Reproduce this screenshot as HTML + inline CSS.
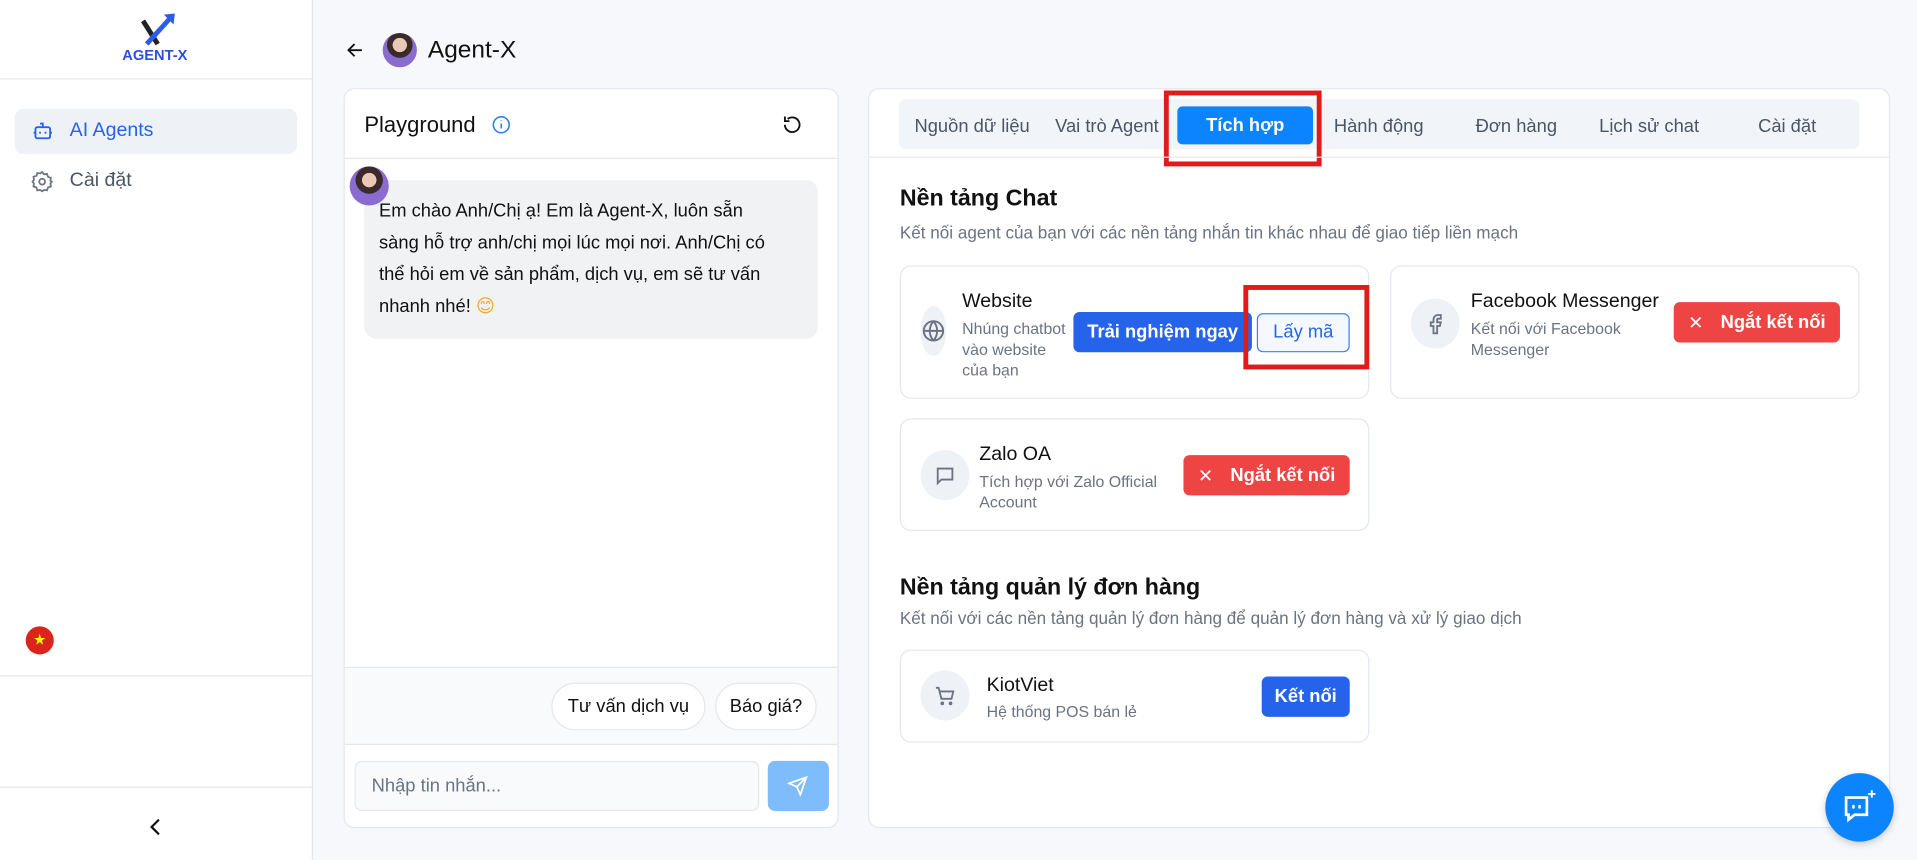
<!DOCTYPE html>
<html><head><meta charset="utf-8"><style>
*{box-sizing:border-box;margin:0;padding:0}
html,body{width:1917px;height:860px;overflow:hidden;background:#f5f7fa;font-family:"Liberation Sans","DejaVu Sans",sans-serif}
#w{position:absolute;left:0;top:0;width:1568px;height:703px;transform:scale(1.22258,1.2233);transform-origin:0 0;background:#f6f8fb}
.a{position:absolute}
.side{left:0;top:0;width:256px;height:703px;background:#fff;border-right:1px solid #e5e7eb}
.card{background:#fff;border:1px solid #e3e7ee;border-radius:9px}
.t{white-space:nowrap}
.gray{color:#6b7280}
.btn{border-radius:5px;color:#fff;font-weight:bold;font-size:15px;display:flex;align-items:center;justify-content:center}
.ic{background:#eef2f7;border-radius:50%;display:flex;align-items:center;justify-content:center}
</style></head><body><div id="w">
<div class="a side">
  <svg class="a" style="left:112px;top:10px" width="34" height="28" viewBox="0 0 34 28"><path d="M5 7 L17 26" stroke="#222" stroke-width="4"/><path d="M8 26 L28 4" stroke="#2d5bea" stroke-width="4"/><path d="M22 2 L31 1 L30 10 Z" fill="#2d5bea"/></svg>
  <div class="a t" style="left:100px;top:38px;font-size:12px;font-weight:bold;color:#2d4fe0">AGENT-X</div>
  <div class="a" style="left:0;top:64px;width:256px;border-top:1px solid #e5e7eb"></div>
  <div class="a" style="left:12px;top:89px;width:231px;height:37px;background:#eef2f7;border-radius:7px"></div>
  <svg class="a" style="left:26px;top:98px" width="18" height="18" viewBox="0 0 24 24" fill="none" stroke="#2563eb" stroke-width="2"><rect x="4" y="8" width="16" height="12" rx="2"/><path d="M12 8V4H9M9 13v2M15 13v2M2 14h2M20 14h2"/></svg>
  <div class="a t" style="left:57px;top:98px;font-size:16px;color:#2563eb">AI Agents</div>
  <svg class="a" style="left:25px;top:139px" width="19" height="19" viewBox="0 0 24 24" fill="none" stroke="#6b7280" stroke-width="1.8"><circle cx="12" cy="12" r="3"/><path d="M12 2l2 2.5 3-.5 1 3 3 1-.5 3L22 12l-1.5 2 .5 3-3 1-1 3-3-.5L12 22l-2-1.5-3 .5-1-3-3-1 .5-3L2 12l1.5-2-.5-3 3-1 1-3 3 .5z"/></svg>
  <div class="a t" style="left:57px;top:139px;font-size:16px;color:#4b5563">Cài đặt</div>
  <div class="a" style="left:21px;top:512px;width:23px;height:23px;border-radius:50%;background:#da251d;color:#ff0;font-size:12px;text-align:center;line-height:23px">★</div>
  <div class="a" style="left:0;top:552px;width:256px;border-top:1px solid #e5e7eb"></div>
  <div class="a" style="left:0;top:643px;width:256px;border-top:1px solid #e5e7eb"></div>
  <svg class="a" style="left:121px;top:668px" width="12" height="16" viewBox="0 0 12 16" fill="none" stroke="#111" stroke-width="1.8"><path d="M9 2L3 8l6 6"/></svg>
</div>
<svg class="a" style="left:284px;top:35px" width="13" height="12" viewBox="0 0 13 12" fill="none" stroke="#111" stroke-width="1.5"><path d="M12 6H2M6 1L1 6l5 5"/></svg>
<div class="a" style="left:313px;top:27px;width:28px;height:28px;border-radius:50%;background:radial-gradient(circle at 50% 35%,#e9c8b5 0 25%,#3a2a2a 26% 45%,#8a6bd0 46%)"></div>
<div class="a t" style="left:350px;top:30px;font-size:20px;color:#111">Agent-X</div>

<div class="a card" style="left:281px;top:72px;width:405px;height:605px;overflow:hidden">
  <div class="a t" style="left:16px;top:19px;font-size:18px;color:#111">Playground</div>
  <svg class="a" style="left:120px;top:21px" width="16" height="16" viewBox="0 0 16 16" fill="none" stroke="#2f80ed" stroke-width="1.3"><circle cx="8" cy="8" r="6.5"/><path d="M8 7v4M8 4.5v.5"/></svg>
  <svg class="a" style="left:357px;top:20px" width="18" height="18" viewBox="0 0 24 24" fill="none" stroke="#111" stroke-width="2"><path d="M4 12a8 8 0 1 0 3-6.3M4 3v5h5"/></svg>
  <div class="a" style="left:0;top:56px;width:405px;border-top:1px solid #e5e7eb"></div>
  <div class="a" style="left:16px;top:74px;width:371px;height:130px;background:#f1f2f4;border-radius:10px"></div>
  <div class="a" style="left:4px;top:63px;width:32px;height:32px;border-radius:50%;background:radial-gradient(circle at 50% 35%,#e9c8b5 0 22%,#3a2a2a 23% 42%,#8a6bd0 43%)"></div>
  <div class="a t" style="left:28px;top:87px;font-size:15px;line-height:26px;color:#111">Em chào Anh/Chị ạ! Em là Agent-X, luôn sẵn<br>sàng hỗ trợ anh/chị mọi lúc mọi nơi. Anh/Chị có<br>thể hỏi em về sản phẩm, dịch vụ, em sẽ tư vấn<br>nhanh nhé! <span style="color:#f4a623">😊</span></div>
  <div class="a" style="left:0;top:472px;width:405px;height:64px;background:#f8fafc;border-top:1px solid #e5e7eb;border-bottom:1px solid #e5e7eb"></div>
  <div class="a t" style="left:169px;top:485px;width:126px;height:39px;border:1px solid #e5e7eb;border-radius:20px;background:#fff;font-size:15px;line-height:37px;text-align:center;color:#111">Tư vấn dịch vụ</div>
  <div class="a t" style="left:303px;top:485px;width:83px;height:39px;border:1px solid #e5e7eb;border-radius:20px;background:#fff;font-size:15px;line-height:37px;text-align:center;color:#111">Báo giá?</div>
  <div class="a" style="left:8px;top:549px;width:331px;height:41px;border:1px solid #e5e7eb;border-radius:6px;background:#f8fafc;font-size:15px;line-height:39px;padding-left:13px;color:#6b7280">Nhập tin nhắn...</div>
  <div class="a" style="left:346px;top:549px;width:50px;height:41px;border-radius:6px;background:#7fbcfb"></div>
  <svg class="a" style="left:362px;top:561px" width="17" height="17" viewBox="0 0 24 24" fill="none" stroke="#fff" stroke-width="2"><path d="M22 2L11 13M22 2l-7 20-4-9-9-4z"/></svg>
</div>

<div class="a card" style="left:710px;top:72px;width:836px;height:605px">
  <div class="a" style="left:24px;top:8px;width:786px;height:41px;background:#f1f5f9;border-radius:6px"></div>
  <div class="a t gray" style="left:37px;top:22px;font-size:15px;color:#4b5563">Nguồn dữ liệu</div>
  <div class="a t" style="left:152px;top:22px;font-size:15px;color:#4b5563">Vai trò Agent</div>
  <div class="a" style="left:252px;top:14px;width:111px;height:31px;background:#0b84fe;border-radius:4px;color:#fff;font-size:15px;font-weight:bold;text-align:center;line-height:31px">Tích hợp</div>
  <div class="a" style="left:241px;top:1px;width:129px;height:62px;border:4px solid #e01b1b"></div>
  <div class="a t" style="left:380px;top:22px;font-size:15px;color:#4b5563">Hành động</div>
  <div class="a t" style="left:496px;top:22px;font-size:15px;color:#4b5563">Đơn hàng</div>
  <div class="a t" style="left:597px;top:22px;font-size:15px;color:#4b5563">Lịch sử chat</div>
  <div class="a t" style="left:727px;top:22px;font-size:15px;color:#4b5563">Cài đặt</div>
  <div class="a" style="left:0;top:55px;width:834px;border-top:1px solid #e5e7eb"></div>
  <div class="a t" style="left:25px;top:79px;font-size:19px;font-weight:600;color:#111">Nền tảng Chat</div>
  <div class="a t gray" style="left:25px;top:109px;font-size:14px">Kết nối agent của bạn với các nền tảng nhắn tin khác nhau để giao tiếp liền mạch</div>

  <div class="a card" style="left:25px;top:144px;width:384px;height:109px">
    <div class="a ic" style="left:16px;top:32px;width:21px;height:41px"><svg width="19" height="19" viewBox="0 0 24 24" fill="none" stroke="#6b7280" stroke-width="2"><circle cx="12" cy="12" r="10"/><path d="M2 12h20M12 2a15 15 0 0 1 0 20M12 2a15 15 0 0 0 0 20"/></svg></div>
    <div class="a t" style="left:50px;top:20px;font-size:16px;color:#111">Website</div>
    <div class="a gray" style="left:50px;top:42px;width:92px;font-size:13px;line-height:17px">Nhúng chatbot vào website của bạn</div>
    <div class="a btn" style="left:141px;top:37px;width:146px;height:33px;background:#2563eb">Trải nghiệm ngay</div>
    <div class="a" style="left:291px;top:38px;width:76px;height:32px;border:1px solid #3b82f6;border-radius:5px;background:#f5f9ff;color:#2563eb;font-size:15px;text-align:center;line-height:30px">Lấy mã</div>
    <div class="a" style="left:280px;top:15px;width:103px;height:69px;border:4px solid #e01b1b"></div>
  </div>
  <div class="a card" style="left:426px;top:144px;width:384px;height:109px">
    <div class="a ic" style="left:16px;top:26px;width:40px;height:41px"><svg width="18" height="18" viewBox="0 0 24 24" fill="none" stroke="#6b7280" stroke-width="2"><path d="M18 2h-3a5 5 0 0 0-5 5v3H7v4h3v8h4v-8h3l1-4h-4V7a1 1 0 0 1 1-1h3z"/></svg></div>
    <div class="a t" style="left:65px;top:20px;font-size:16px;color:#111">Facebook Messenger</div>
    <div class="a gray" style="left:65px;top:42px;width:140px;font-size:13px;line-height:17px">Kết nối với Facebook Messenger</div>
    <div class="a btn" style="left:231px;top:29px;width:136px;height:33px;background:#ef4444"><span style="font-weight:normal;margin-right:14px">✕</span>Ngắt kết nối</div>
  </div>
  <div class="a card" style="left:25px;top:269px;width:384px;height:92px">
    <div class="a ic" style="left:16px;top:25px;width:40px;height:41px"><svg width="18" height="18" viewBox="0 0 24 24" fill="none" stroke="#6b7280" stroke-width="2"><path d="M4 4h16v12H8l-4 4z"/></svg></div>
    <div class="a t" style="left:64px;top:20px;font-size:16px;color:#111">Zalo OA</div>
    <div class="a gray" style="left:64px;top:42px;width:160px;font-size:13px;line-height:17px">Tích hợp với Zalo Official Account</div>
    <div class="a btn" style="left:231px;top:29px;width:136px;height:33px;background:#ef4444"><span style="font-weight:normal;margin-right:14px">✕</span>Ngắt kết nối</div>
  </div>

  <div class="a t" style="left:25px;top:397px;font-size:19px;font-weight:600;color:#111">Nền tảng quản lý đơn hàng</div>
  <div class="a t gray" style="left:25px;top:424px;font-size:14px">Kết nối với các nền tảng quản lý đơn hàng để quản lý đơn hàng và xử lý giao dịch</div>
  <div class="a card" style="left:25px;top:458px;width:384px;height:76px">
    <div class="a ic" style="left:16px;top:16px;width:40px;height:41px"><svg width="18" height="18" viewBox="0 0 24 24" fill="none" stroke="#6b7280" stroke-width="2"><path d="M2 3h3l3 12h11l2-8H6"/><circle cx="9" cy="20" r="1"/><circle cx="18" cy="20" r="1"/></svg></div>
    <div class="a t" style="left:70px;top:20px;font-size:16px;color:#111">KiotViet</div>
    <div class="a t gray" style="left:70px;top:42px;font-size:13px">Hệ thống POS bán lẻ</div>
    <div class="a btn" style="left:295px;top:21px;width:72px;height:33px;background:#2563eb">Kết nối</div>
  </div>
</div>
<div class="a" style="left:1493px;top:632px;width:56px;height:56px;border-radius:50%;background:#0b84fe;box-shadow:0 2px 6px rgba(0,0,0,.2)"></div>
<svg class="a" style="left:1505px;top:644px" width="32" height="32" viewBox="0 0 32 32" fill="none" stroke="#fff" stroke-width="2.2"><path d="M5 8h17v14H12l-5 4v-4H5z"/><path d="M11 15v1M16 15v1" stroke-linecap="round"/><path d="M26 2v6M23 5h6" stroke-width="1.6"/></svg>
</div></body></html>
